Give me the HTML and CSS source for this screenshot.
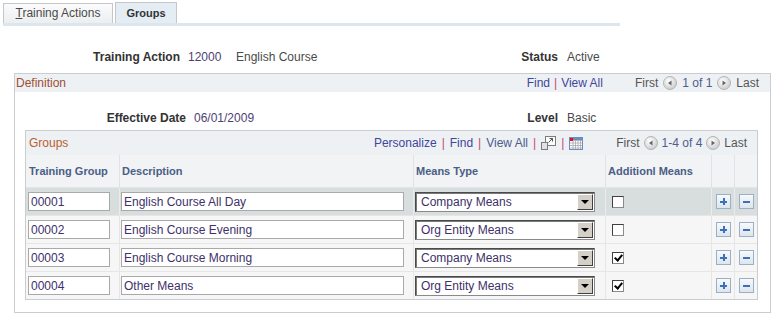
FILE: index.html
```
<!DOCTYPE html>
<html lang="en">
<head>
  <meta charset="UTF-8">
  <title>Groups</title>
  <link rel="stylesheet" href="styles.css">
</head>
<body>

  <div class="tabs">
    <div class="tab tab-actions"><u>T</u>raining Actions</div>
    <div class="tab tab-groups">Groups</div>
  </div>

  <div class="info info-top">
    <span class="lbl lbl-action">Training Action</span>
    <span class="val val-id">12000</span>
    <span class="val val-name">English Course</span>
    <span class="lbl lbl-status">Status</span>
    <span class="val val-right">Active</span>
  </div>

  <div class="box">
    <div class="bar">
      <span class="bar-title">Definition</span>
      <div class="nav nav-def">
        <span class="link">Find</span><span class="sep">|</span><span class="link">View All</span>
        <span class="pager">First</span>
        <svg class="arrow" width="14" height="14" viewBox="0 0 14 14"><circle cx="7" cy="7" r="6.5" fill="url(#gl)" stroke="#b4b4b4"/><path d="M8.5 4.5 L5 7 L8.5 9.5 Z" fill="#666"/></svg>
        <span class="count">1 of 1</span>
        <svg class="arrow" width="14" height="14" viewBox="0 0 14 14"><circle cx="7" cy="7" r="6.5" fill="url(#gl)" stroke="#b4b4b4"/><path d="M5.5 4.5 L9 7 L5.5 9.5 Z" fill="#666"/></svg>
        <span class="pager-end">Last</span>
      </div>
    </div>

    <div class="info info-eff">
      <span class="lbl lbl-eff">Effective Date</span>
      <span class="val val-date">06/01/2009</span>
      <span class="lbl lbl-level">Level</span>
      <span class="val val-right">Basic</span>
    </div>

    <div class="grid">
      <div class="grid-bar">
        <span class="grid-title">Groups</span>
        <div class="nav nav-grid">
          <span class="link">Personalize</span><span class="sep">|</span><span class="link">Find</span><span class="sep">|</span><span class="link link-soft">View All</span><span class="sep">|</span>
          <svg width="15" height="14" viewBox="0 0 15 14"><rect x="4.5" y="0.5" width="10" height="9" fill="#fbfbfb" stroke="#7c7c7c"/><path d="M7.5 6.5 L11.5 2.5 M8.5 2.5 H11.5 V5.5" stroke="#555" fill="none"/><rect x="0.5" y="6.5" width="6" height="7" fill="#e2e2e2" stroke="#7c7c7c"/></svg><span class="sep">|</span>
          <svg width="14" height="13" viewBox="0 0 14 13"><rect x="0.5" y="0.5" width="13" height="12" fill="#fff" stroke="#6a8cc6"/><path d="M1 3.5 H13 M1 6 H13 M1 8.5 H13 M1 11 H13 M4 3 V12 M6.5 3 V12 M9 3 V12 M11.5 3 V12" stroke="#a8a8a8" stroke-width="0.8"/><rect x="1" y="1" width="12" height="2" fill="#6a8cc6"/><rect x="1" y="1" width="3" height="3" fill="#e01818"/></svg>
          <span class="pager pager-grid">First</span>
          <svg class="arrow" width="14" height="14" viewBox="0 0 14 14"><circle cx="7" cy="7" r="6.5" fill="url(#gl)" stroke="#b4b4b4"/><path d="M8.5 4.5 L5 7 L8.5 9.5 Z" fill="#666"/></svg>
          <span class="count">1-4 of 4</span>
          <svg class="arrow" width="14" height="14" viewBox="0 0 14 14"><circle cx="7" cy="7" r="6.5" fill="url(#gl)" stroke="#b4b4b4"/><path d="M5.5 4.5 L9 7 L5.5 9.5 Z" fill="#666"/></svg>
          <span class="pager-end">Last</span>
        </div>
      </div>

      <div class="row row-head">
        <div class="cell">Training Group</div>
        <div class="cell">Description</div>
        <div class="cell">Means Type</div>
        <div class="cell">Additionl Means</div>
        <div class="cell"></div>
        <div class="cell"></div>
      </div>

      <div class="row row-active">
        <div class="cell"><input class="txt txt-code" type="text" value="00001"></div>
        <div class="cell"><input class="txt txt-desc" type="text" value="English Course All Day"></div>
        <div class="cell"><div class="select"><span>Company Means</span><span class="drop"></span></div></div>
        <div class="cell"><span class="chk"></span></div>
        <div class="cell"><span class="btn btn-add"></span></div>
        <div class="cell"><span class="btn btn-del"></span></div>
      </div>

      <div class="row">
        <div class="cell"><input class="txt txt-code" type="text" value="00002"></div>
        <div class="cell"><input class="txt txt-desc" type="text" value="English Course Evening"></div>
        <div class="cell"><div class="select"><span>Org Entity Means</span><span class="drop"></span></div></div>
        <div class="cell"><span class="chk"></span></div>
        <div class="cell"><span class="btn btn-add"></span></div>
        <div class="cell"><span class="btn btn-del"></span></div>
      </div>

      <div class="row">
        <div class="cell"><input class="txt txt-code" type="text" value="00003"></div>
        <div class="cell"><input class="txt txt-desc" type="text" value="English Course Morning"></div>
        <div class="cell"><div class="select"><span>Company Means</span><span class="drop"></span></div></div>
        <div class="cell"><span class="chk checked"></span></div>
        <div class="cell"><span class="btn btn-add"></span></div>
        <div class="cell"><span class="btn btn-del"></span></div>
      </div>

      <div class="row">
        <div class="cell"><input class="txt txt-code" type="text" value="00004"></div>
        <div class="cell"><input class="txt txt-desc" type="text" value="Other Means"></div>
        <div class="cell"><div class="select"><span>Org Entity Means</span><span class="drop"></span></div></div>
        <div class="cell"><span class="chk checked"></span></div>
        <div class="cell"><span class="btn btn-add"></span></div>
        <div class="cell"><span class="btn btn-del"></span></div>
      </div>
    </div>
  </div>

  <svg width="0" height="0" class="defs">
    <defs>
      <radialGradient id="gl" cx="0.4" cy="0.35" r="0.7">
        <stop offset="0" stop-color="#ffffff"/>
        <stop offset="1" stop-color="#c9c9c9"/>
      </radialGradient>
    </defs>
  </svg>

</body>
</html>
```

FILE: styles.css
```
body { margin: 0; font-family: "Liberation Sans", Arial, sans-serif; font-size: 12px; color: #333; }

/* tabs */
.tabs { display: flex; align-items: flex-end; gap: 2px; width: 617px; height: 21px; margin: 2px 0 0 3px; border-bottom: 3px solid #dce6ee; }
.tab { box-sizing: border-box; height: 20px; line-height: 18px; border: 1px solid #c3c7cb; border-bottom: 0; text-align: center; color: #4a4a4a; background: linear-gradient(#fbfbfc, #eceef0); }
.tab-actions { width: 110px; }
.tab-groups { width: 62px; height: 21px; line-height: 20px; font-size: 11px; font-weight: bold; color: #333; background: #e4ecf4; }

/* label / value rows */
.info { display: flex; height: 14px; line-height: 14px; }
.info-top { margin-top: 24px; }
.info-eff { margin-top: 19px; }
.lbl { font-weight: bold; text-align: right; color: #333; }
.val { color: #4a4a4a; }
.lbl-action { width: 180px; }
.val-id { width: 48px; margin-left: 8px; color: #4e3f72; }
.val-name { width: 250px; }
.lbl-status { width: 72px; }
.val-right { margin-left: 9px; }
.lbl-eff { width: 171px; }
.val-date { width: 290px; margin-left: 8px; color: #4e3f72; }
.lbl-level { width: 74px; }

/* definition box */
.box { margin: 9px 0 0 14px; width: 755px; height: 238px; border: 1px solid #c9cdd1; }
.bar { display: flex; justify-content: space-between; align-items: center; height: 18px; background: #eef1f3; }
.bar-title { padding-left: 1px; color: #9f4d34; }
.nav { display: flex; align-items: center; color: #555; }
.nav-def { padding-right: 11px; }
.nav-def .sep { padding: 0 4px; }
.link { color: #3f469c; }
.link-soft { color: #4c5a8c; }
.sep { padding: 0 5px; color: #c4467c; }
.pager { margin-left: 32px; }
.pager-grid { margin-left: 33px; }
.nav-grid .arrow { margin: 0 4px; }
.arrow { margin: 0 5px; }
.count { color: #4c5e8e; }

/* groups grid */
.grid { margin: 5px 0 0 10px; width: 731px; border: 1px solid #c9cdd1; }
.grid-bar { display: flex; justify-content: space-between; align-items: center; height: 24px; background: #eef1f3; }
.grid-title { padding-left: 3px; color: #b95e30; }
.nav-grid { padding-right: 10px; }

.row { display: grid; grid-template-columns: 93px 294px 192px 106px 23px 23px; box-sizing: border-box; height: 28px; border-top: 1px solid #e6e6e6; background: #f6f6f6; }
.cell { display: flex; align-items: center; border-left: 1px solid #e6e6e6; }
.cell:first-child { border-left: 0; }
.row-head { height: 32px; border-top: 0; background: #f1f3f4; font-size: 11px; font-weight: bold; color: #4a5e86; }
.row-head .cell { padding-left: 2px; border-left-color: #dfe3e6; }
.row-head .cell:first-child { padding-left: 3px; }
.row-active { background: #d8dddd; border-top-color: #e2e6e6; }
.row-active .cell { border-left-color: #e8ecec; }

.txt { box-sizing: border-box; height: 19px; margin: 0 0 0 2px; padding: 0 2px; border: 1px solid #a9a9a9; background: #fff; font: 12px "Liberation Sans", Arial, sans-serif; color: #40306a; outline: none; }
.txt-code { width: 82px; }
.txt-desc { width: 283px; margin-left: 1px; }

.select { box-sizing: border-box; display: flex; align-items: center; justify-content: space-between; width: 180px; height: 20px; margin-left: 1px; padding-left: 5px; border: 1px solid #4a4a4a; border-right-color: #8a8a8a; border-bottom-color: #8a8a8a; box-shadow: inset 1px 1px 0 #7a7a7a; background: #fff; color: #40306a; }
.drop { box-sizing: border-box; position: relative; width: 16px; height: 16px; margin-right: 1px; background: #d4d0c8; border: 1px solid; border-color: #fff #404040 #404040 #fff; }
.drop::after { content: ""; position: absolute; left: 3px; top: 5px; border-left: 4px solid transparent; border-right: 4px solid transparent; border-top: 4px solid #000; }

.chk { box-sizing: border-box; position: relative; width: 12px; height: 12px; margin-left: 6px; background: #fff; border: 1px solid #8a8a8a; border-top-color: #404040; border-left-color: #404040; }
.checked::after { content: ""; position: absolute; left: 3px; top: 0; width: 3px; height: 6px; border: solid #000; border-width: 0 2px 2px 0; transform: rotate(40deg); }

.btn { box-sizing: border-box; position: relative; width: 15px; height: 15px; margin-left: 4px; border: 1px solid #9bb0c4; background: linear-gradient(#f7f9fb, #dde5ed); }
.btn::before { content: ""; position: absolute; left: 3px; top: 5.5px; width: 7px; height: 2px; background: #3a70bc; }
.btn-add::after { content: ""; position: absolute; left: 5.5px; top: 3px; width: 2px; height: 7px; background: #3a70bc; }

.defs { position: absolute; }
```
